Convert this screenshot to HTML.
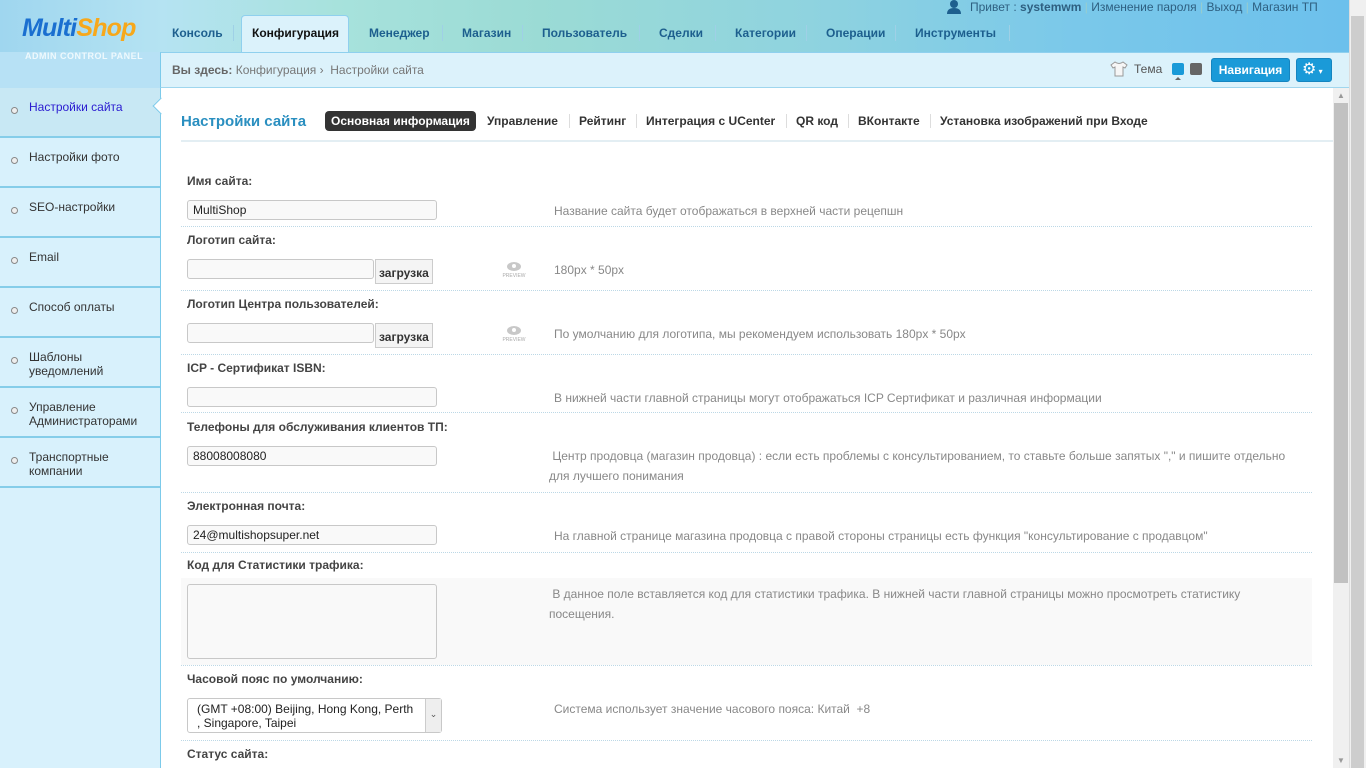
<!DOCTYPE html>
<html><head><meta charset="utf-8"><style>
*{margin:0;padding:0;box-sizing:border-box}
body{width:1366px;height:768px;overflow:hidden;font-family:"Liberation Sans",Arial,sans-serif;font-size:12px;color:#333;background:#fff;position:relative}
.a{position:absolute}
#hdr{left:0;top:0;width:1349px;height:52px;background:linear-gradient(90deg,#9fd6ef 0%,#b5e3f2 12%,#a7e2dc 25%,#9bdbd5 40%,#8fd3df 60%,#7ac8ea 80%,#6cc0ec 100%)}
#logo{left:22px;top:14px;font:italic bold 25px "Liberation Sans",sans-serif;color:#1a6fd0;letter-spacing:-0.8px}
#logo span{color:#f7a81b}
#acp{left:25px;top:51px;font:bold 9px "Liberation Sans",sans-serif;color:#eef9fd;letter-spacing:0.5px}
#logobg{left:0;top:52px;width:160px;height:36px;background:#b7e1f5}
.tab{top:26px;font-weight:bold;font-size:12px;color:#1d5f8e}
.sep{top:25px;width:1px;height:16px;background:#9fd0e6}
#act{left:241px;top:15px;width:108px;height:38px;background:#dbf2fb;border:1px solid #8fd0ee;border-bottom:none;border-radius:4px 4px 0 0}
#top{top:0;font-size:12px;color:#2e5f80}
#bc{left:160px;top:52px;width:1189px;height:36px;background:#dcf2fb;border-top:1px solid #8fd0ee;border-left:1px solid #7ccaea;border-bottom:1px solid #9fd6ee}
#side{left:0;top:88px;width:161px;height:680px;background:#d8f1fc;border-right:1px solid #7ccaea}
.it{left:0;width:160px;height:50px;border-bottom:2px solid #85cde9}
.it .d{position:absolute;left:11px;top:19px;width:7px;height:7px;border:1px solid #888;border-radius:50%;background:#eee}
.it .t{position:absolute;left:29px;top:12px;font-size:12px;color:#333;line-height:14px}
.lbl{left:187px;font-weight:bold;font-size:12px;color:#444}
.inp{left:187px;width:250px;height:20px;border:1px solid #c8c8c8;border-radius:3px;background:#f9f9f9;padding:2px 5px;font-size:12px;color:#222}
.hint{left:554px;font-size:12px;color:#888}
.hr{left:181px;width:1131px;height:0;border-top:1px dotted #bcd8e6}
.up{left:375px;width:58px;height:25px;border:1px solid #ccc;background:#f4f4f4;font-weight:bold;font-size:12px;color:#333;padding:6px 0 0 3px}
.pv{left:501px;font-size:5px;color:#aaa;text-align:center;width:26px}
.pv i{display:block;margin:0 auto 2px;width:14px;height:9px;background:#c8c8c8;border-radius:50%;position:relative}
.pv i:after{content:"";position:absolute;left:5px;top:2px;width:4px;height:4px;border-radius:50%;background:#fff}
.st{top:114px;font-weight:bold;font-size:12px;color:#333}
.ss{top:114px;width:1px;height:14px;background:#ddd}
</style></head><body>
<div class="a" id="hdr"></div>
<div class="a" id="logobg"></div>
<div class="a" id="logo">Multi<span>Shop</span></div>
<div class="a" id="acp">ADMIN CONTROL PANEL</div>
<div class="a" id="act"></div>
<div class="a tab" style="left:172px">Консоль</div><div class="a sep" style="left:233px"></div>
<div class="a tab" style="left:252px;color:#111">Конфигурация</div>
<div class="a tab" style="left:369px">Менеджер</div><div class="a sep" style="left:442px"></div>
<div class="a tab" style="left:462px">Магазин</div><div class="a sep" style="left:522px"></div>
<div class="a tab" style="left:542px">Пользователь</div><div class="a sep" style="left:639px"></div>
<div class="a tab" style="left:659px">Сделки</div><div class="a sep" style="left:715px"></div>
<div class="a tab" style="left:735px">Категории</div><div class="a sep" style="left:806px"></div>
<div class="a tab" style="left:826px">Операции</div><div class="a sep" style="left:895px"></div>
<div class="a tab" style="left:915px">Инструменты</div><div class="a sep" style="left:1009px"></div>
<svg class="a" style="left:946px;top:0" width="16" height="14"><circle cx="8" cy="4" r="4" fill="#1d5f8e"/><path d="M1 14 Q1 8 8 8 Q15 8 15 14Z" fill="#1d5f8e"/></svg>
<div class="a" id="top" style="left:970px">Привет : <b>systemwm</b> <span style="color:#9cc">|</span> Изменение пароля <span style="color:#9cc">|</span> Выход <span style="color:#9cc">|</span> Магазин ТП</div>
<div class="a" style="left:1349px;top:0;width:17px;height:768px;background:#f0f0f0;border-left:1px solid #ddd"></div>
<div class="a" style="left:1351px;top:16px;width:13px;height:752px;background:#cdcdcd"></div>
<div class="a" id="bc"></div>
<div class="a" style="left:172px;top:63px;font-size:12px;color:#777"><b style="color:#666">Вы здесь:</b> Конфигурация › &nbsp;Настройки сайта</div>
<svg class="a" style="left:1110px;top:61px" width="18" height="16"><path d="M5 1 L1 4 L3 7 L5 6 L5 15 L13 15 L13 6 L15 7 L17 4 L13 1 Q9 4 5 1Z" fill="#f6f6f6" stroke="#999"/></svg>
<div class="a" style="left:1134px;top:62px;color:#555">Тема</div>
<div class="a" style="left:1172px;top:63px;width:12px;height:12px;background:#1a9ad8;border-radius:2px"></div>
<div class="a" style="left:1175px;top:77px;border:3px solid transparent;border-bottom-color:#666;border-top:none"></div>
<div class="a" style="left:1190px;top:63px;width:12px;height:12px;background:#666;border-radius:2px"></div>
<div class="a" style="left:1211px;top:58px;width:79px;height:24px;background:#1a9ad8;border:1px solid #1585c0;border-radius:3px;color:#fff;font-weight:bold;text-align:center;line-height:22px">Навигация</div>
<div class="a" style="left:1296px;top:58px;width:36px;height:24px;background:#1a9ad8;border:1px solid #1585c0;border-radius:3px;color:#fff;font-size:16px;line-height:22px;padding-left:5px">⚙<span style="font-size:8px"> ▾</span></div>
<div class="a" id="side">
<div class="a it" style="top:0;background:#c8e8f4"><span class="d"></span><span class="t" style="color:#2a1ad0">Настройки сайта</span></div>
<div class="a it" style="top:50px"><span class="d"></span><span class="t">Настройки фото</span></div>
<div class="a it" style="top:100px"><span class="d"></span><span class="t">SEO-настройки</span></div>
<div class="a it" style="top:150px"><span class="d"></span><span class="t">Email</span></div>
<div class="a it" style="top:200px"><span class="d"></span><span class="t">Способ оплаты</span></div>
<div class="a it" style="top:250px"><span class="d"></span><span class="t">Шаблоны<br>уведомлений</span></div>
<div class="a it" style="top:300px"><span class="d"></span><span class="t">Управление<br>Администраторами</span></div>
<div class="a it" style="top:350px"><span class="d"></span><span class="t">Транспортные<br>компании</span></div>
</div>
<div class="a" style="left:155px;top:100px;width:12px;height:12px;background:#fff;border-left:1px solid #7ccaea;border-bottom:1px solid #7ccaea;transform:rotate(45deg)"></div>
<div class="a" style="left:1333px;top:88px;width:16px;height:680px;background:#f0f0f0"></div>
<div class="a" style="left:1334px;top:103px;width:14px;height:480px;background:#c1c1c1"></div>
<div class="a" style="left:1337px;top:91px;font-size:8px;color:#999">▲</div>
<div class="a" style="left:1337px;top:756px;font-size:8px;color:#999">▼</div>
<div class="a" style="left:181px;top:113px;font-size:15px;font-weight:bold;color:#2a8fc0">Настройки сайта</div>
<div class="a" style="left:325px;top:111px;width:151px;height:20px;background:#333;border-radius:4px"></div>
<div class="a st" style="left:331px;color:#fff">Основная информация</div>
<div class="a st" style="left:487px">Управление</div><div class="a ss" style="left:569px"></div>
<div class="a st" style="left:579px">Рейтинг</div><div class="a ss" style="left:636px"></div>
<div class="a st" style="left:646px">Интеграция с UCenter</div><div class="a ss" style="left:786px"></div>
<div class="a st" style="left:796px">QR код</div><div class="a ss" style="left:848px"></div>
<div class="a st" style="left:858px">ВКонтакте</div><div class="a ss" style="left:930px"></div>
<div class="a st" style="left:940px">Установка изображений при Входе</div>
<div class="a" style="left:181px;top:140px;width:1152px;height:2px;background:#e3eef3"></div>
<div class="a" style="left:181px;top:578px;width:1131px;height:87px;background:#f9f9f9"></div>

<div class="a lbl" style="top:174px">Имя сайта:</div>
<div class="a inp" style="top:200px">MultiShop</div>
<div class="a hint" style="top:204px">Название сайта будет отображаться в верхней части рецепшн</div>
<div class="a hr" style="top:226px"></div>
<div class="a lbl" style="top:233px">Логотип сайта:</div>
<div class="a inp" style="top:259px;width:187px"></div>
<div class="a up" style="top:259px">загрузка</div>
<div class="a pv" style="top:262px"><i></i>PREVIEW</div>
<div class="a hint" style="top:263px">180px * 50px</div>
<div class="a hr" style="top:290px"></div>
<div class="a lbl" style="top:297px">Логотип Центра пользователей:</div>
<div class="a inp" style="top:323px;width:187px"></div>
<div class="a up" style="top:323px">загрузка</div>
<div class="a pv" style="top:326px"><i></i>PREVIEW</div>
<div class="a hint" style="top:327px">По умолчанию для логотипа, мы рекомендуем использовать 180px * 50px</div>
<div class="a hr" style="top:354px"></div>
<div class="a lbl" style="top:361px">ICP - Сертификат ISBN:</div>
<div class="a inp" style="top:387px"></div>
<div class="a hint" style="top:391px">В нижней части главной страницы могут отображаться ICP Сертификат и различная информации</div>
<div class="a hr" style="top:412px"></div>
<div class="a lbl" style="top:420px">Телефоны для обслуживания клиентов ТП:</div>
<div class="a inp" style="top:446px">88008008080</div>
<div class="a hint" style="top:446px;left:549px;line-height:20px;width:750px">&nbsp;Центр продовца (магазин продовца) : если есть проблемы с консультированием, то ставьте больше запятых "," и пишите отдельно для лучшего понимания</div>
<div class="a hr" style="top:492px"></div>
<div class="a lbl" style="top:499px">Электронная почта:</div>
<div class="a inp" style="top:525px">24@multishopsuper.net</div>
<div class="a hint" style="top:529px">На главной странице магазина продовца с правой стороны страницы есть функция "консультирование с продавцом"</div>
<div class="a hr" style="top:552px"></div>
<div class="a lbl" style="top:558px">Код для Статистики трафика:</div>
<div class="a inp" style="top:584px;height:75px"></div>
<div class="a hint" style="top:584px;left:549px;line-height:20px;width:750px">&nbsp;В данное поле вставляется код для статистики трафика. В нижней части главной страницы можно просмотреть статистику посещения.</div>
<div class="a hr" style="top:665px"></div>
<div class="a lbl" style="top:672px">Часовой пояс по умолчанию:</div>
<div class="a inp" style="top:698px;width:255px;height:35px;padding:3px 16px 0 9px;line-height:14px;background:#fff;white-space:nowrap">(GMT +08:00) Beijing, Hong Kong, Perth<br>, Singapore, Taipei</div>
<div class="a" style="left:425px;top:699px;width:16px;height:33px;background:#eee;border-left:1px solid #ccc;font-size:9px;color:#555;text-align:center;line-height:30px">⌄</div>
<div class="a hint" style="top:702px">Система использует значение часового пояса: Китай &nbsp;+8</div>
<div class="a hr" style="top:740px"></div>
<div class="a lbl" style="top:747px">Статус сайта:</div>
</body></html>
